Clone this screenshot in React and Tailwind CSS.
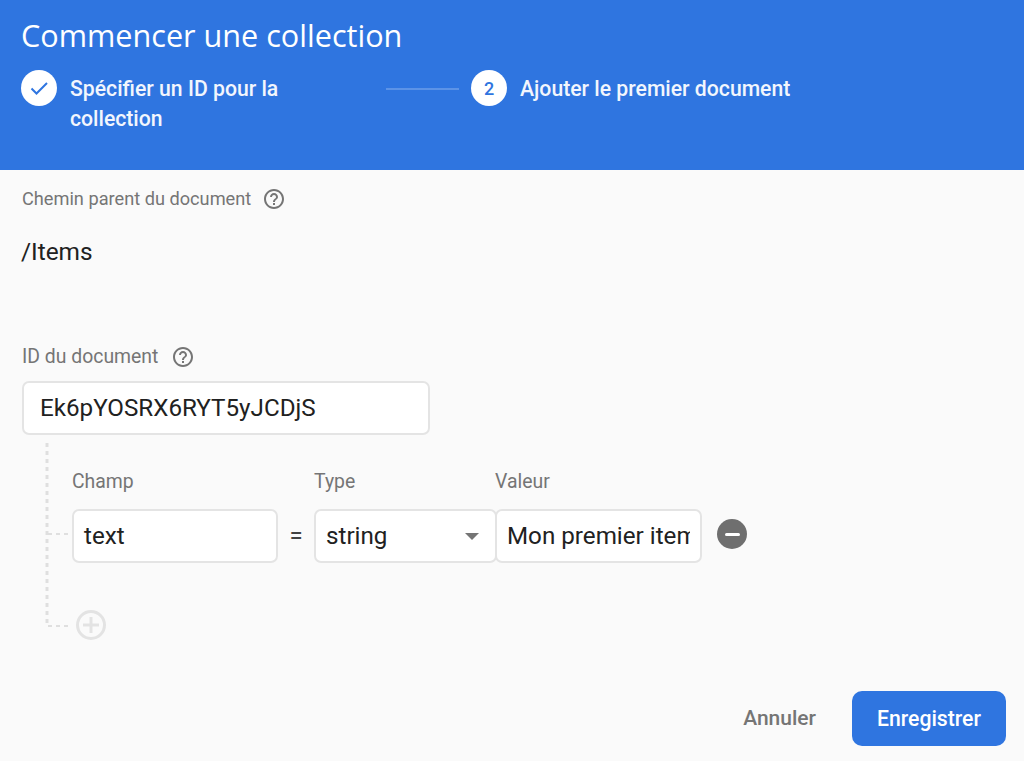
import React from "react";

const Help = () => (
  <svg width="24" height="24" viewBox="0 0 24 24" fill="#757575" className="shrink-0">
    <path d="M11 18h2v-2h-2v2zm1-16C6.48 2 2 6.48 2 12s4.48 10 10 10 10-4.48 10-10S17.52 2 12 2zm0 18c-4.41 0-8-3.59-8-8s3.59-8 8-8 8 3.59 8 8-3.59 8-8 8zm0-14c-2.21 0-4 1.79-4 4h2c0-1.1.9-2 2-2s2 .9 2 2c0 2-3 1.75-3 5h2c0-2.25 3-2.5 3-5 0-2.21-1.79-4-4-4z" />
  </svg>
);

const box = "bg-white border-2 border-[#e4e4e4] rounded-[7px] flex items-center text-[24.2px] text-[#212121]";

export default function App() {
  return (
    <div className="w-[1024px] h-[761px] bg-[#fafafa] overflow-hidden font-['Roboto',sans-serif]">
      <header className="h-[170px] bg-[#2f75e0] pl-[21px] pt-[15px] text-white">
        <h1 className="text-[30.6px] leading-[40px] font-['Open_Sans',sans-serif] font-normal">Commencer une collection</h1>
        <div className="flex mt-[15px]">
          <div className="w-9 h-9 rounded-full bg-white flex items-center justify-center shrink-0">
            <svg width="24" height="24" viewBox="0 0 24 24" fill="none" stroke="#2f75e0" strokeWidth="2">
              <path d="M4.5 12.5l5 5L20 7" />
            </svg>
          </div>
          <div className="w-[260px] ml-[13px] text-[21.2px] leading-[30px] font-medium text-[#f2f6fd] mt-[4px]">Spécifier un ID pour la collection</div>
          <div className="w-[73px] h-0.5 bg-[#5c93e7] ml-[56px] mt-[18px]" />
          <div className="w-9 h-9 rounded-full bg-white flex items-center justify-center shrink-0 ml-3 text-[#2f75e0] text-[18px] font-medium">2</div>
          <div className="ml-[13px] text-[21.2px] leading-[30px] font-medium text-[#f2f6fd] mt-[4px]">Ajouter le premier document</div>
        </div>
      </header>

      <main className="pl-[22px] pr-[18px]">
        <div className="flex items-center gap-[11px] mt-[17px] h-[24px] text-[18.2px] text-[#757575]">
          <span>Chemin parent du document</span>
          <Help />
        </div>
        <div className="mt-[26px] -ml-px h-[30px] leading-[30px] text-[24.4px] text-[#212121]">/Items</div>

        <div className="flex items-center gap-[13px] mt-[78px] h-[24px] text-[19.4px] text-[#757575]">
          <span>ID du document</span>
          <Help />
        </div>
        <div className={`${box} w-[408px] h-[54px] mt-[12px] pl-[16px]`}>Ek6pYOSRX6RYT5yJCDjS</div>

        <div className="relative h-[192px] mt-[8px] pl-[50px]">
          <svg width="50" height="192" className="absolute left-0 top-0" fill="none" stroke="#dfdfdf" strokeWidth="3" strokeDasharray="4 4">
            <path d="M25 0V183" />
            <path d="M26 91H50" strokeWidth="2" />
            <path d="M26 183H50" strokeWidth="2" />
          </svg>
          <div className="flex pt-[27px] h-[66px] text-[19.4px] leading-[24px] text-[#757575]">
            <span className="w-[242px]">Champ</span>
            <span className="w-[181px]">Type</span>
            <span>Valeur</span>
          </div>
          <div className="flex items-center">
            <div className={`${box} w-[206px] h-[54px] pl-[10px]`}>text</div>
            <span className="w-[36px] text-center text-[24px] text-[#424242]">=</span>
            <div className={`${box} w-[183px] h-[54px] pl-[10px] pr-[16px] justify-between`}>
              <span>string</span>
              <span className="w-0 h-0 border-x-[7px] border-x-transparent border-t-[7px] border-t-[#757575]" />
            </div>
            <div className={`${box} w-[207px] h-[54px] -ml-[2px] pl-[10px] pr-[10px]`}>
              <span className="block overflow-hidden whitespace-nowrap">Mon premier item</span>
            </div>
            <div className="w-[30px] h-[30px] rounded-full bg-[#6f6f6f] ml-[15px] -mt-[4px] flex items-center justify-center">
              <span className="w-[15px] h-[3px] rounded-sm bg-white" />
            </div>
          </div>
          <div className="w-[30px] h-[30px] mt-[47px] ml-[4px] rounded-full border-[3px] border-[#e3e3e3] flex items-center justify-center">
            <svg width="18" height="18" viewBox="0 0 18 18" stroke="#e3e3e3" strokeWidth="3">
              <path d="M9 1v16M1 9h16" />
            </svg>
          </div>
        </div>

        <div className="flex justify-end items-center mt-[56px]">
          <span className="text-[21px] font-medium text-[#757575] mr-[36px]">Annuler</span>
          <button className="w-[154px] h-[55px] rounded-[10px] bg-[#2f75e0] text-white text-[21.2px] font-medium">Enregistrer</button>
        </div>
      </main>
    </div>
  );
}
